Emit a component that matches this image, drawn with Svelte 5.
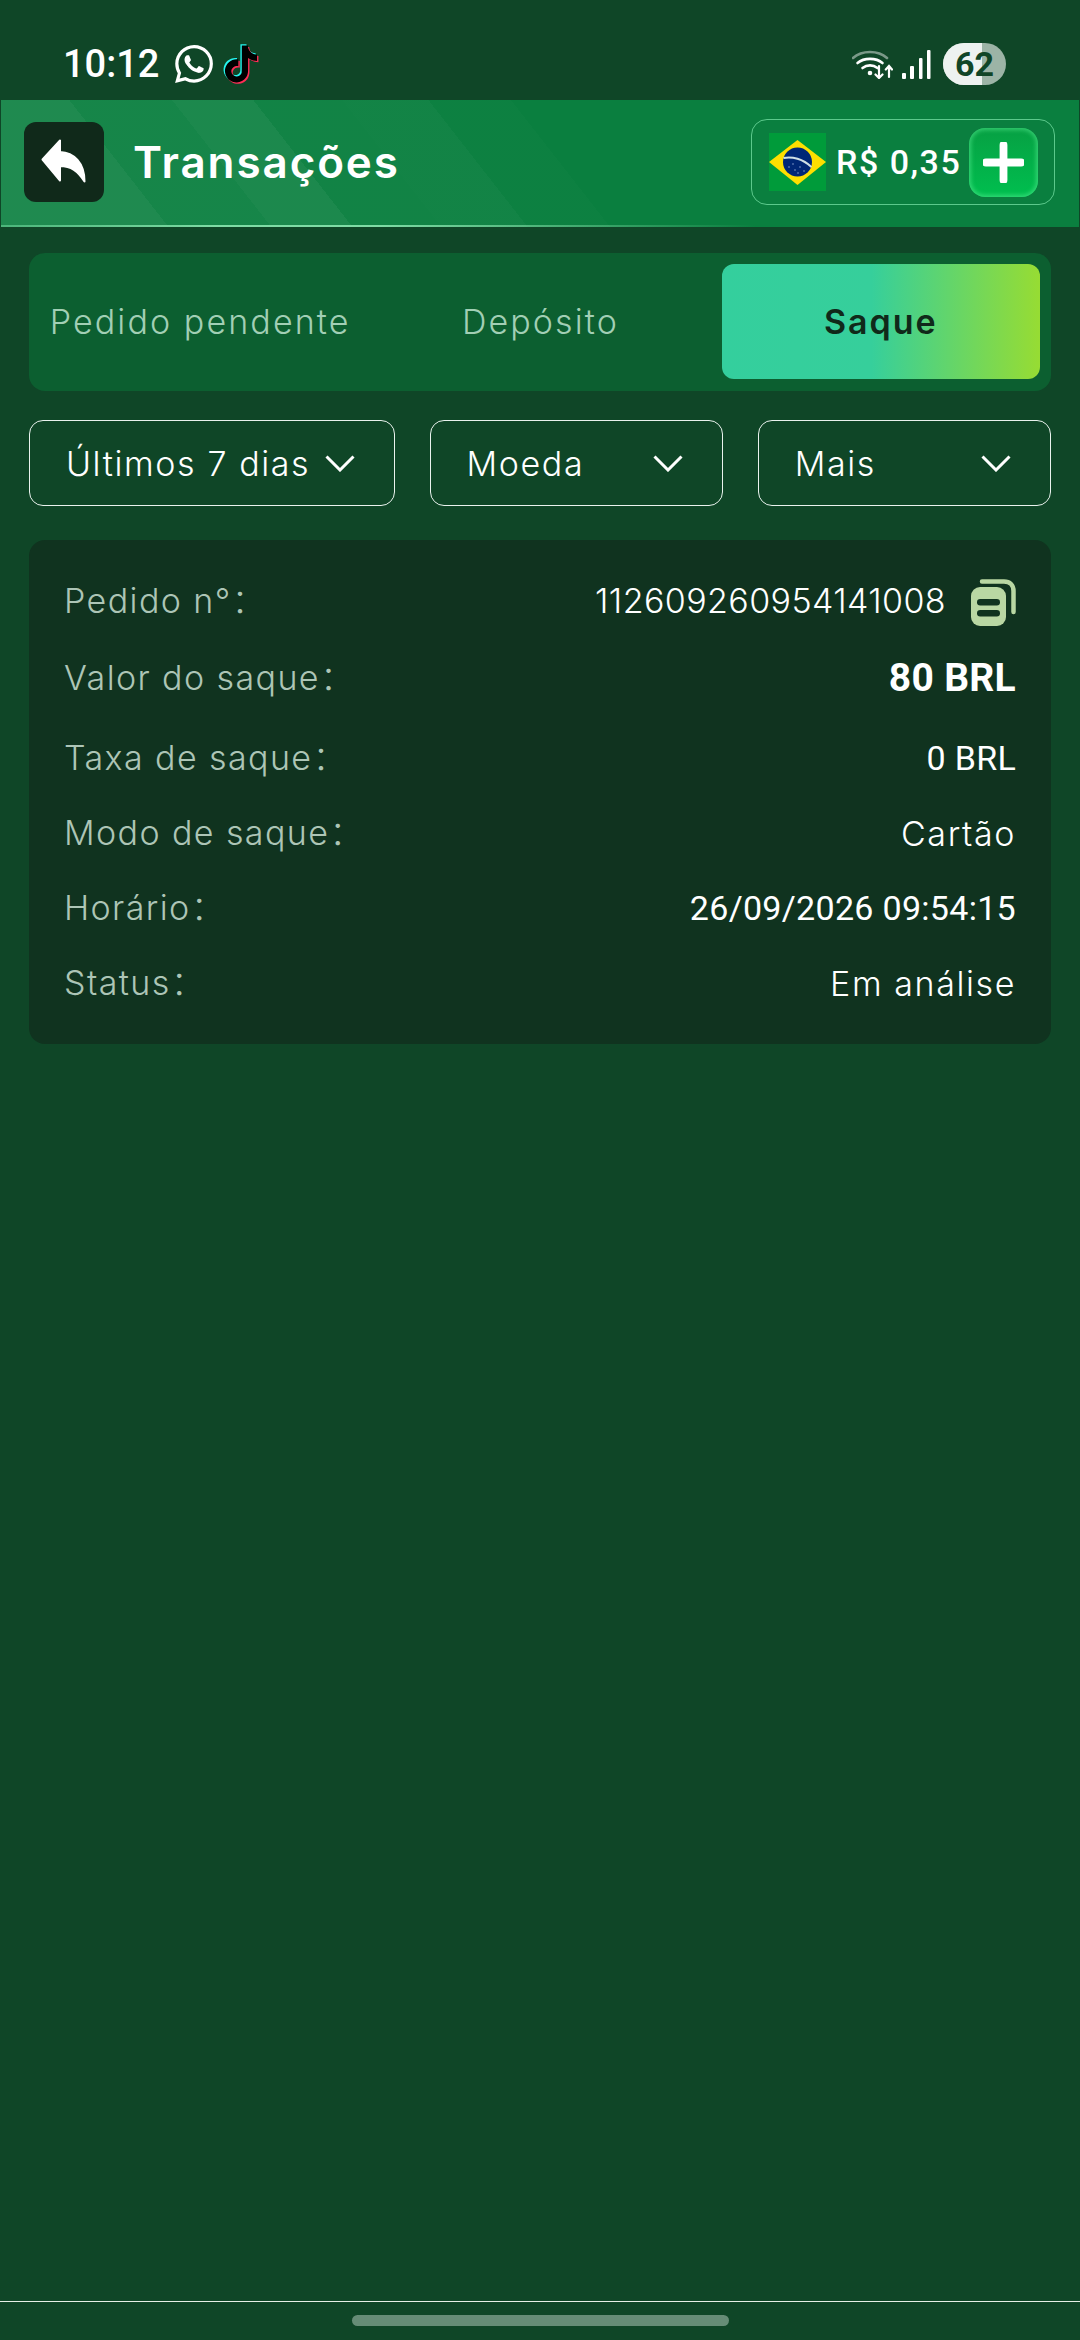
<script>
  const tabs = [
    { label: 'Pedido pendente', active: false },
    { label: 'Depósito', active: false },
    { label: 'Saque', active: true },
  ];
  const filters = [
    { label: 'Últimos 7 dias', cls: 'wide' },
    { label: 'Moeda', cls: 'mid' },
    { label: 'Mais', cls: 'mid' },
  ];
  const waPath =
    'M17.472 14.382c-.297-.149-1.758-.867-2.03-.967-.273-.099-.471-.148-.67.15-.197.297-.767.966-.94 1.164-.173.199-.347.223-.644.075-.297-.15-1.255-.463-2.39-1.475-.883-.788-1.48-1.761-1.653-2.059-.173-.297-.018-.458.13-.606.134-.133.298-.347.446-.52.149-.174.198-.298.298-.497.099-.198.05-.371-.025-.52-.075-.149-.669-1.612-.916-2.207-.242-.579-.487-.5-.669-.51-.173-.008-.371-.01-.57-.01-.198 0-.52.074-.792.372-.272.297-1.04 1.016-1.04 2.479 0 1.462 1.065 2.875 1.213 3.074.149.198 2.096 3.2 5.077 4.487.709.306 1.262.489 1.694.625.712.227 1.36.195 1.871.118.571-.085 1.758-.719 2.006-1.413.248-.694.248-1.289.173-1.413-.074-.124-.272-.198-.57-.347m-5.421 7.403h-.004a9.87 9.87 0 01-5.031-1.378l-.361-.214-3.741.982.998-3.648-.235-.374a9.86 9.86 0 01-1.51-5.26c.001-5.45 4.436-9.884 9.888-9.884 2.64 0 5.122 1.03 6.988 2.898a9.825 9.825 0 012.893 6.994c-.003 5.45-4.437 9.884-9.885 9.884m8.413-18.297A11.815 11.815 0 0012.05 0C5.495 0 .16 5.335.157 11.892c0 2.096.547 4.142 1.588 5.945L.057 24l6.305-1.654a11.882 11.882 0 005.683 1.448h.005c6.554 0 11.89-5.335 11.893-11.893a11.821 11.821 0 00-3.48-8.413z';
  const ttPath =
    'M12.525.02c1.31-.02 2.61-.01 3.91-.02.08 1.53.63 3.09 1.75 4.17 1.12 1.11 2.7 1.62 4.24 1.79v4.03c-1.44-.05-2.89-.35-4.2-.97-.57-.26-1.1-.59-1.62-.93-.01 2.92.01 5.84-.02 8.75-.08 1.4-.54 2.79-1.35 3.94-1.31 1.92-3.58 3.17-5.91 3.21-1.43.08-2.86-.31-4.08-1.03-2.02-1.19-3.44-3.37-3.65-5.71-.02-.5-.03-1-.01-1.49.18-1.9 1.12-3.72 2.58-4.96 1.66-1.44 3.98-2.13 6.15-1.72.02 1.48-.04 2.96-.04 4.44-.99-.32-2.15-.23-3.02.37-.63.41-1.11 1.04-1.36 1.75-.21.51-.15 1.07-.14 1.61.24 1.64 1.82 3.02 3.5 2.87 1.12-.01 2.19-.66 2.77-1.61.19-.33.4-.67.41-1.06.1-1.79.06-3.57.07-5.36.01-4.03-.01-8.05.02-12.07z';
</script>

<div class="screen">
  <div class="statusbar">
    <div class="status-left">
      <span class="time">10:12</span>
      <svg class="wa" viewBox="0 0 24 24"><path d={waPath} fill="#fff" /></svg>
      <svg class="tt" viewBox="-1 -1 26 26">
        <path d={ttPath} fill="#25f4ee" transform="translate(-.9 -.9)" />
        <path d={ttPath} fill="#fe2c55" transform="translate(.9 .9)" />
        <path d={ttPath} fill="#000" />
      </svg>
    </div>
    <div class="status-right">
      <svg class="wifi" viewBox="0 0 41 30" fill="none" stroke="#fff" stroke-linecap="round">
        <path d="M1 9C10 1 26 1 35 9" stroke-width="2.6" opacity=".45" />
        <path d="M5.500 14C12 8.500 24 8.500 30.500 14" stroke-width="2.6" />
        <path d="M10.500 19C15 15.500 21 15.500 25.500 19" stroke-width="2.6" />
        <circle cx="18" cy="24" r="2.300" fill="#fff" stroke="none" />
        <path d="M27 17V29M23.500 25.500L27 29L30.500 25.500" stroke-width="2.200" />
        <path d="M37 28V17M33.800 20.500L37 17L40 20.500" stroke-width="2.200" />
      </svg>
      <svg class="signal" viewBox="0 0 29 29" fill="#fff">
        <rect x="0" y="23" width="4" height="6" rx="1" />
        <rect x="8" y="16" width="4" height="13" rx="1" />
        <rect x="17" y="8" width="3.500" height="21" rx="1" />
        <rect x="25" y="0" width="3.500" height="29" rx="1" />
      </svg>
      <div class="battery"><span class="level"></span><span class="pct">62</span></div>
    </div>
  </div>

  <header class="topbar">
    <button class="back" aria-label="Voltar">
      <svg viewBox="0 0 45 44"><path d="M1.500 20.500L19 1.500V13C33 13.500 43.500 24 43.500 42.500C37 32 30 27 19 27V41.500Z" fill="#fff" stroke="#fff" stroke-width="2" stroke-linejoin="round" /></svg>
    </button>
    <h1>Transações</h1>
    <div class="balance">
      <svg class="flag" viewBox="0 0 57 58">
        <rect width="57" height="58" fill="#009b3a" />
        <path d="M0 29L28.500 7L57 29L28.500 52Z" fill="#fedf00" />
        <circle cx="28.500" cy="29" r="14.500" fill="#002776" />
        <path d="M14.500 25C23 23 34 26 42.500 34" fill="none" stroke="#cfe0e6" stroke-width="2" />
        <g fill="#9fb6dd">
          <circle cx="20" cy="34" r=".7" /><circle cx="26" cy="37" r=".7" /><circle cx="31" cy="34" r=".7" />
          <circle cx="35" cy="38" r=".7" /><circle cx="24" cy="31" r=".7" /><circle cx="29" cy="40" r=".7" />
        </g>
      </svg>
      <span class="amount">R$ 0,35</span>
      <button class="plus" aria-label="Depositar">
        <svg viewBox="0 0 42 42"><path d="M21 3V39M3 21H39" stroke="#fff" stroke-width="8" stroke-linecap="round" /></svg>
      </button>
    </div>
  </header>

  <main class="content">
    <div class="tabs">
      {#each tabs as tab}
        <div class="tab" class:active={tab.active}>{tab.label}</div>
      {/each}
    </div>

    <div class="filters">
      {#each filters as f}
        <div class="filter {f.cls}">
          <span>{f.label}</span>
          <svg viewBox="0 0 30 17" fill="none"><path d="M1.500 1.500L15 15L28.500 1.500" stroke="#fff" stroke-width="3" /></svg>
        </div>
      {/each}
    </div>

    <section class="card">
      <div class="row first">
        <span class="key">Pedido n°：</span>
        <span class="val order">
          112609260954141008
          <svg class="copy" viewBox="0 0 45 47">
            <path d="M11 2.500H33C39 2.500 42.500 6 42.500 12V33" fill="none" stroke="#b9d7a3" stroke-width="4.500" stroke-linecap="round" />
            <rect x="0" y="8" width="35" height="39" rx="9" fill="#b9d7a3" />
            <rect x="6" y="20" width="23" height="6.500" rx="3.200" fill="#10331f" />
            <rect x="6" y="31" width="23" height="6.500" rx="3.200" fill="#10331f" />
          </svg>
        </span>
      </div>
      <div class="row big">
        <span class="key">Valor do saque：</span>
        <span class="val roboto bold">80 BRL</span>
      </div>
      <div class="row">
        <span class="key">Taxa de saque：</span>
        <span class="val roboto">0 BRL</span>
      </div>
      <div class="row">
        <span class="key">Modo de saque：</span>
        <span class="val">Cartão</span>
      </div>
      <div class="row">
        <span class="key">Horário：</span>
        <span class="val roboto">26/09/2026 09:54:15</span>
      </div>
      <div class="row">
        <span class="key">Status：</span>
        <span class="val">Em análise</span>
      </div>
    </section>
  </main>

  <div class="navbar"><span class="handle"></span></div>
</div>

<style>
  :global(body) {
    margin: 0;
    background: #0f4627;
  }

  .screen {
    width: 1080px;
    height: 2340px;
    display: flex;
    flex-direction: column;
    background: #0f4627;
    color: #fff;
    font-family: Inter, "Noto Sans CJK SC", sans-serif;
    overflow: hidden;
  }

  .statusbar {
    height: 100px;
    flex-shrink: 0;
    display: flex;
    justify-content: space-between;
    align-items: flex-start;
    padding: 43px 74px 0 63px;
    box-sizing: border-box;
  }

  .status-left,
  .status-right {
    display: flex;
    align-items: center;
    height: 42px;
  }

  .time {
    font-family: Roboto, sans-serif;
    font-weight: 500;
    font-size: 38px;
    line-height: 42px;
    width: 112px;
  }

  .wa {
    width: 38px;
    height: 38px;
  }

  .tt {
    width: 40px;
    height: 40px;
    margin-left: 8px;
  }

  .wifi {
    width: 41px;
    height: 30px;
    margin-right: 9px;
  }

  .signal {
    width: 29px;
    height: 29px;
    margin-right: 12px;
  }

  .battery {
    position: relative;
    width: 63px;
    height: 42px;
    border-radius: 21px;
    background: #9cb4a6;
    overflow: hidden;
  }

  .level {
    position: absolute;
    left: 0;
    top: 0;
    bottom: 0;
    width: 39px;
    background: #edf2f0;
  }

  .pct {
    position: absolute;
    inset: 0;
    text-align: center;
    font-family: Roboto, sans-serif;
    font-weight: 700;
    font-size: 34px;
    line-height: 42px;
    color: #104527;
  }

  .topbar {
    height: 127px;
    flex-shrink: 0;
    box-sizing: border-box;
    display: flex;
    align-items: center;
    margin: 0 1px;
    padding: 0 24px 3px 23px;
    background:
      linear-gradient(90deg, rgba(120, 225, 165, 0.5), #7fdca5 20%, #7fdca5 35%, transparent 70%) bottom / 100% 2px no-repeat,
      linear-gradient(
        52deg,
        rgba(255, 255, 255, 0.085) 0 132px,
        rgba(255, 255, 255, 0.05) 132px 213px,
        rgba(255, 255, 255, 0.075) 213px 277px,
        rgba(255, 255, 255, 0.03) 277px 347px,
        rgba(255, 255, 255, 0.035) 347px 415px,
        rgba(255, 255, 255, 0.012) 415px 480px,
        transparent 480px
      ),
      #0a7f3f;
  }

  .back {
    width: 80px;
    height: 80px;
    flex-shrink: 0;
    padding: 17px 18px 19px 17px;
    border: 0;
    border-radius: 12px;
    background: #10291a;
    display: flex;
  }

  .back svg {
    width: 45px;
    height: 44px;
  }

  h1 {
    margin: 0 0 0 29px;
    font-size: 44px;
    font-weight: 600;
    letter-spacing: 1.9px;
    flex: 1;
  }

  .balance {
    width: 304px;
    height: 86px;
    box-sizing: border-box;
    display: flex;
    align-items: center;
    padding: 0 16px 0 17px;
    border: 1px solid #5cc98c;
    border-radius: 16px;
  }

  .flag {
    width: 57px;
    height: 58px;
    flex-shrink: 0;
  }

  .amount {
    font-family: Roboto, sans-serif;
    font-weight: 500;
    font-size: 34px;
    letter-spacing: 1.5px;
    margin-left: 10px;
    white-space: nowrap;
    flex: 1;
  }

  .plus {
    width: 69px;
    height: 69px;
    flex-shrink: 0;
    padding: 14px;
    border: 0;
    border-radius: 16px;
    background: linear-gradient(#07a043, #00bf4f);
    box-shadow: inset 0 0 4px 2px rgba(90, 240, 150, 0.55);
    display: flex;
  }

  .plus svg {
    width: 41px;
    height: 41px;
  }

  .content {
    flex: 1;
    padding: 26px 29px 0;
    display: flex;
    flex-direction: column;
  }

  .tabs {
    height: 138px;
    box-sizing: border-box;
    display: grid;
    grid-template-columns: repeat(3, 1fr);
    gap: 22px;
    padding: 11px 11px 12px 12px;
    background: #0c5f30;
    border-radius: 16px;
  }

  .tab {
    display: flex;
    align-items: center;
    justify-content: center;
    font-size: 34px;
    letter-spacing: 2.1px;
    font-weight: 300;
    color: #a2cfb5;
    white-space: nowrap;
    border-radius: 12px;
  }

  .tab.active {
    font-weight: 600;
    letter-spacing: 2px;
    color: #10291a;
    background: linear-gradient(90deg, #34cf9d 0%, #36cf9b 47%, #97dc33 100%);
  }

  .filters {
    display: flex;
    gap: 35px;
    margin-top: 29px;
  }

  .filter {
    height: 86px;
    box-sizing: border-box;
    display: flex;
    align-items: center;
    justify-content: space-between;
    padding: 0 39px 0 36px;
    border: 1px solid #eaf3ee;
    border-radius: 14px;
    font-size: 34px;
    letter-spacing: 1.6px;
    font-weight: 300;
  }

  .filter.wide {
    width: 366px;
  }

  .filter.mid {
    width: 293.500px;
  }

  .filter svg {
    width: 30px;
    height: 17px;
    flex-shrink: 0;
  }

  .card {
    margin-top: 34px;
    height: 504px;
    box-sizing: border-box;
    display: flex;
    flex-direction: column;
    gap: 25px;
    padding: 38px 35px 0;
    background: #10331f;
    border-radius: 16px;
  }

  .row {
    height: 50px;
    display: flex;
    align-items: center;
    justify-content: space-between;
  }

  .row.first {
    height: 45px;
  }

  .row.big {
    height: 60px;
  }

  .key {
    font-size: 34px;
    line-height: 40px;
    letter-spacing: 1.4px;
    font-weight: 300;
    color: #adc5b6;
  }

  .val {
    font-size: 34px;
    letter-spacing: 1.6px;
    font-weight: 300;
    display: flex;
    align-items: center;
  }

  .order {
    letter-spacing: 0.4px;
  }

  .roboto {
    font-family: Roboto, sans-serif;
    font-weight: 400;
    letter-spacing: 0.3px;
  }

  .bold {
    font-weight: 700;
    font-size: 39px;
  }

  .copy {
    width: 45px;
    height: 47px;
    margin: 3px 0 0 25px;
  }

  .navbar {
    height: 39px;
    box-sizing: border-box;
    flex-shrink: 0;
    display: flex;
    justify-content: center;
    padding-top: 13px;
    border-top: 1px solid #e6efe6;
  }

  .handle {
    width: 377px;
    height: 11px;
    border-radius: 6px;
    background: #668c76;
  }
</style>
